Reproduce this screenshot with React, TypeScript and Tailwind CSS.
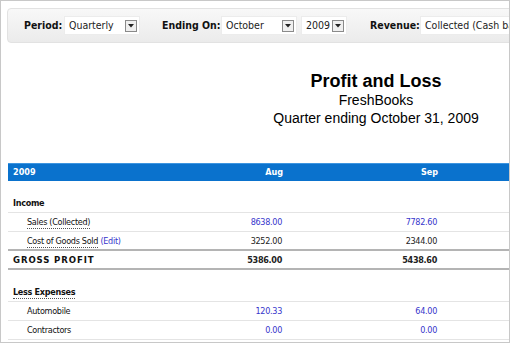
import React from "react";

const ui = { fontFamily: '"DejaVu Sans Condensed", "DejaVu Sans", sans-serif' };
const arial = { fontFamily: '"Liberation Sans", Arial, sans-serif' };

function Select({ value, width }: { value: string; width: string }) {
  return (
    <div className={`${width} h-[19px] bg-white border border-[#ececec] flex items-center justify-between pl-[4px] pr-[2px] text-[10.5px] text-[#222] overflow-hidden whitespace-nowrap`}>
      <span>{value}</span>
      <span className="w-[12px] h-[12px] shrink-0 border border-[#8a8a8a] bg-[#efefef] flex items-center justify-center">
        <svg width="6" height="4" viewBox="0 0 6 4"><path d="M0 0 L6 0 L3 3.5 Z" fill="#222" /></svg>
      </span>
    </div>
  );
}

function Row({
  label,
  aug,
  sep,
  blue,
  indent,
  bold,
  dark,
}: {
  label: React.ReactNode;
  aug?: string;
  sep?: string;
  blue?: boolean;
  indent?: boolean;
  bold?: boolean;
  dark?: boolean;
}) {
  const num = blue ? "text-[#3636cc]" : "text-[#222]";
  return (
    <div
      className={`grid grid-cols-[193px_90px_155px_1fr] h-[19px] pt-[2px] items-center text-[9px] tracking-[-0.3px] ${
        dark ? "border-b-2 border-[#b4b4b4]" : "border-b border-[#e4e4e4]"
      } ${bold ? "font-bold" : ""}`}
    >
      <div className={`${indent ? "pl-[19px]" : "pl-[5px]"} text-[#111] whitespace-nowrap`}>{label}</div>
      <div className={`text-right pr-[9px] ${num}`}>{aug}</div>
      <div className={`text-right pr-[9px] ${num}`}>{sep}</div>
      <div />
    </div>
  );
}

const dotted = "border-b border-dotted border-[#555] pb-[1px]";

export default function App() {
  return (
    <div className="w-[510px] h-[343px] border border-[#c8c8c8] bg-white overflow-hidden" style={ui}>
      <div className="w-[744px] pt-[7px] pl-[6px]">
        {/* toolbar */}
        <div className="h-[35px] rounded-[4px] border border-[#e2e2e2] bg-gradient-to-b from-[#f8f8f8] to-[#ebebeb] flex items-center pl-[16px] text-[11px]">
          <span className="w-[40px] font-bold text-[10.5px] text-[#111]">Period:</span>
          <Select value="Quarterly" width="w-[76px]" />
          <span className="w-[57px] ml-[22px] font-bold text-[10.5px] text-[#111] whitespace-nowrap">Ending On:</span>
          <div className="ml-[2px]">
            <Select value="October" width="w-[76px]" />
          </div>
          <div className="ml-[4px]">
            <Select value="2009" width="w-[46px]" />
          </div>
          <span className="w-[50px] ml-[23px] font-bold text-[10.5px] text-[#111]">Revenue:</span>
          <Select value="Collected (Cash basis)" width="w-[150px]" />
        </div>

        {/* title */}
        <div className="text-center text-[#000] mt-[28px]" style={arial}>
          <div className="text-[18px] font-bold leading-[20px]">Profit and Loss</div>
          <div className="text-[14px] leading-[18px]">FreshBooks</div>
          <div className="text-[14px] leading-[19px]">Quarter ending October 31, 2009</div>
        </div>

        {/* table */}
        <div className="mt-[35px] ml-px">
          <div className="grid grid-cols-[193px_90px_155px_1fr] h-[18px] items-center bg-[#0a72cd] border-t border-[#3d95e0] text-white text-[9px] font-bold">
            <div className="pl-[5px]">2009</div>
            <div className="text-right pr-[8px]">Aug</div>
            <div className="text-right pr-[8px]">Sep</div>
            <div />
          </div>

          <div className="mt-[13px]">
            <Row label="Income" bold />
            <Row label={<span className={dotted}>Sales (Collected)</span>} aug="8638.00" sep="7782.60" blue indent />
            <Row
              label={
                <>
                  <span className={dotted}>Cost of Goods Sold</span> <span className="text-[#3636cc]">(Edit)</span>
                </>
              }
              aug="3252.00"
              sep="2344.00"
              indent
              dark
            />
            <Row label={<span className="text-[9.5px] tracking-[0.9px]">GROSS PROFIT</span>} aug="5386.00" sep="5438.60" bold dark />
          </div>

          <div className="mt-[13px]">
            <Row label={<span className={dotted}>Less Expenses</span>} bold />
            <Row label="Automobile" aug="120.33" sep="64.00" blue indent />
            <Row label="Contractors" aug="0.00" sep="0.00" blue indent />
          </div>
        </div>
      </div>
    </div>
  );
}
